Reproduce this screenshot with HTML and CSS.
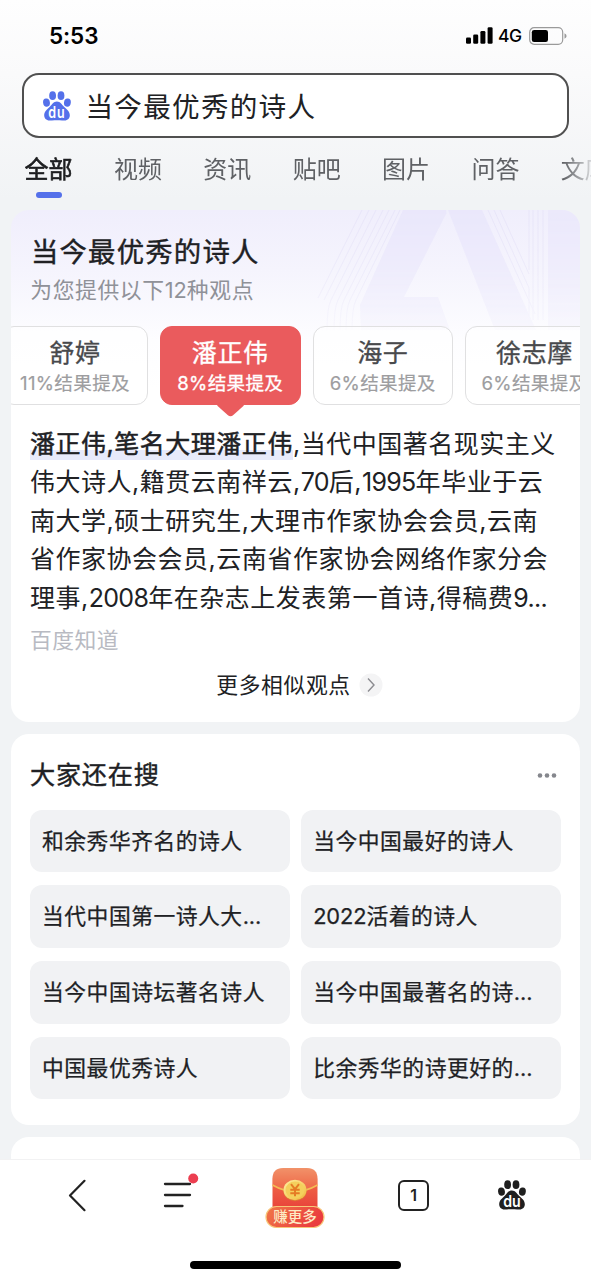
FILE: index.html
```
<!DOCTYPE html>
<html lang="zh-CN">
<head>
<meta charset="utf-8">
<title>当今最优秀的诗人</title>
<link rel="stylesheet" href="styles.css">
</head>
<body>
<svg class="defs" width="0" height="0">
  <symbol id="paw" viewBox="0 0 28 29.5">
    <g fill="currentColor">
      <ellipse cx="9.6" cy="4.4" rx="3.4" ry="4.4"/>
      <ellipse cx="18" cy="4.4" rx="3.4" ry="4.4"/>
      <ellipse cx="3.5" cy="11.4" rx="3.4" ry="4.200" transform="rotate(-8 3.500 11.400)"/>
      <ellipse cx="24.400" cy="11.400" rx="3.400" ry="4.200" transform="rotate(8 24.400 11.400)"/>
      <path d="M13.900 10.200C17.400 10.200 18.600 13 21 15.400C24 18.200 27 20.200 26.800 24.400C26.400 28.600 22.600 29.600 19 29.200C16 28.900 12 28.900 9 29.200C5.400 29.600 1.600 28.600 1.200 24.400C1 20.200 4 18.200 6.800 15.400C9.200 13 10.400 10.200 13.900 10.200Z"/>
    </g>
    <text class="paw-text" x="14" y="26.700" text-anchor="middle" textLength="17.500" lengthAdjust="spacingAndGlyphs">du</text>
  </symbol>
</svg>
<div class="screen">
  <header class="top">
    <div class="status">
      <span class="time">5:53</span>
      <div class="status-right">
        <svg width="27" height="17" viewBox="0 0 27 17"><rect x="0" y="10.500" width="5" height="6.200" rx="1.300"/><rect x="7.200" y="7.500" width="5" height="9.200" rx="1.300"/><rect x="14.400" y="4" width="5" height="12.700" rx="1.300"/><rect x="21.600" y="0.300" width="5" height="16.400" rx="1.300"/></svg>
        <span class="net">4G</span>
        <svg width="38" height="18" viewBox="0 0 38 18"><rect x="0.700" y="0.700" width="33" height="16.600" rx="4.500" fill="none" stroke="#9a9a9a" stroke-width="1.200"/><rect x="2.800" y="3" width="16.200" height="12" rx="2.300"/><path d="M35.500 6.300Q37.600 7.200 37.600 9T35.500 11.700Z" fill="#9a9a9a"/></svg>
      </div>
    </div>
    <div class="search">
      <svg class="logo" width="28" height="30"><use href="#paw"/></svg>
      <span>当今最优秀的诗人</span>
    </div>
    <nav class="tabs">
      <span class="tab active">全部</span><span class="tab">视频</span><span class="tab">资讯</span><span class="tab">贴吧</span><span class="tab">图片</span><span class="tab">问答</span><span class="tab">文库</span>
    </nav>
  </header>

  <main class="feed">
    <section class="card answer">
      <svg class="deco" width="269" height="160" viewBox="311 210 269 160">
        <defs>
          <linearGradient id="fade" x1="0" y1="0" x2="0" y2="1"><stop offset="0" stop-color="#fff" stop-opacity="0.700"/><stop offset="0.350" stop-color="#fff" stop-opacity="0.500"/><stop offset="0.750" stop-color="#fff" stop-opacity="0.150"/></linearGradient>
          <mask id="m"><rect x="311" y="210" width="269" height="160" fill="url(#fade)"/></mask>
        </defs>
        <g mask="url(#m)">
          <path fill="#e7e4fb" d="M403 210H446L446.500 213L404 297H438L450 330H361L360 305Z"/>
          <path fill="#e7e4fb" d="M448 210H482L536 330H495Z"/>
          <rect x="548" y="210" width="32" height="120" fill="#e9e6fb"/>
          <g fill="none" stroke="#e4e1f7" stroke-width="1">
            <path d="M400 210L356 300Q352 308 352 330"/><path d="M395 210L350 300Q346 308 346 330"/><path d="M389 210L344 300Q340 308 340 330"/><path d="M383 210L338 300Q334 308 334 330"/><path d="M376 210L331 300Q327 308 327 330"/><path d="M369 210L324 300"/><path d="M362 210L318 298"/>
            <path d="M488 210L535 314"/><path d="M494 210L529 288V330"/><path d="M500 210L529 274"/><path d="M529 210V270"/><path d="M533 210V320"/><path d="M538 210V320"/><path d="M543 210V320"/>
          </g>
        </g>
      </svg>
      <h1 class="answer-title">当今最优秀的诗人</h1>
      <p class="answer-sub">为您提供以下<span class="num">12</span>种观点</p>
      <div class="chips">
        <div class="chip first"><b>舒婷</b><small>11%结果提及</small></div>
        <div class="chip selected"><b>潘正伟</b><small>8%结果提及</small></div>
        <div class="chip"><b>海子</b><small>6%结果提及</small></div>
        <div class="chip last"><b>徐志摩</b><small>6%结果提及</small></div>
      </div>
      <div class="text">
        <div><mark>潘正伟,笔名大理潘正伟</mark>,当代中国著名现实主义</div>
        <div>伟大诗人,籍贯云南祥云,<span class="num">70</span>后,<span class="num">1995</span>年毕业于云</div>
        <div>南大学,硕士研究生,大理市作家协会会员,云南</div>
        <div>省作家协会会员,云南省作家协会网络作家分会</div>
        <div>理事,<span class="num">2008</span>年在杂志上发表第一首诗,得稿费<span class="num">9...</span></div>
      </div>
      <p class="source">百度知道</p>
      <div class="more"><span>更多相似观点</span>
        <svg width="24" height="24" viewBox="0 0 24 24"><circle cx="12" cy="12" r="11.500" fill="#f4f4f5"/><path d="M9 5.500L15 12L9 18.500" fill="none" stroke="#8b8b90" stroke-width="1.400"/></svg>
      </div>
    </section>

    <section class="card related">
      <div class="related-head"><h2>大家还在搜</h2>
        <svg width="20" height="6" viewBox="0 0 20 6" fill="#85878d"><circle cx="3" cy="3.500" r="2.300"/><circle cx="10" cy="3.500" r="2.300"/><circle cx="17" cy="3.500" r="2.300"/></svg>
      </div>
      <div class="pills">
        <span class="pill">和余秀华齐名的诗人</span><span class="pill">当今中国最好的诗人</span>
        <span class="pill">当代中国第一诗人大<i>...</i></span><span class="pill"><i>2022</i>活着的诗人</span>
        <span class="pill">当今中国诗坛著名诗人</span><span class="pill">当今中国最著名的诗<i>...</i></span>
        <span class="pill">中国最优秀诗人</span><span class="pill">比余秀华的诗更好的<i>...</i></span>
      </div>
    </section>
    <section class="card next"></section>
  </main>

  <footer class="bottom">
    <div class="nav">
      <svg class="back" width="20" height="34" viewBox="0 0 20 34" fill="none" stroke="#222" stroke-width="2.200" stroke-linecap="round" stroke-linejoin="round"><path d="M16.500 1.800L2 16.500L16.500 31.200"/></svg>
      <svg class="menu" width="36" height="40" viewBox="0 0 36 40"><path d="M6 8H31M6 19H31M6 30H23.500" fill="none" stroke="#222" stroke-width="2.300" stroke-linecap="round"/><circle cx="34.200" cy="2.500" r="5" fill="#ec3e50"/></svg>
      <svg class="packet" width="64" height="66" viewBox="0 0 64 66">
        <defs>
          <linearGradient id="r1" x1="0" y1="0" x2="0" y2="1"><stop offset="0" stop-color="#f3a077"/><stop offset="0.400" stop-color="#ef6246"/><stop offset="1" stop-color="#e8423a"/></linearGradient>
          <linearGradient id="r2" x1="0" y1="0" x2="1" y2="0.300"><stop offset="0" stop-color="#f07848"/><stop offset="1" stop-color="#ea3c3e"/></linearGradient>
          <linearGradient id="gold" x1="0" y1="0" x2="1" y2="1"><stop offset="0" stop-color="#fff0a0"/><stop offset="1" stop-color="#efb83c"/></linearGradient>
        </defs>
        <path d="M9.500 44V14Q9.500 3 20.500 3H43.500Q54.500 3 54.500 14V44Z" fill="url(#r1)"/>
        <path d="M9.500 20V14Q9.500 3 20.500 3H43.500Q54.500 3 54.500 14V20Q32 33 9.500 20Z" fill="#f08058" opacity="0.450"/>
        <path d="M9.500 20Q32 33 54.500 20" fill="none" stroke="#f3bd55" stroke-width="1.500"/>
        <ellipse cx="32" cy="26" rx="11.600" ry="10.200" fill="#d98c2e" opacity="0.600"/>
        <ellipse cx="32" cy="25" rx="11.500" ry="10.200" fill="url(#gold)"/>
        <ellipse cx="32" cy="25" rx="9.500" ry="8.400" fill="#f4cf5c"/>
        <path d="M28 19.200L32 24.200L36 19.200M32 24.200V31.200M27.300 24.700H36.700M27.300 28.200H36.700" fill="none" stroke="#e57b24" stroke-width="2"/>
        <rect x="3" y="41.500" width="58" height="21" rx="10.500" fill="url(#r2)" stroke="#f7c77a" stroke-width="1.200"/>
        <text x="32" y="57.200" text-anchor="middle" class="earn">赚更多</text>
      </svg>
      <span class="tabcount">1</span>
      <svg class="home" width="28" height="30"><use href="#paw"/></svg>
    </div>
    <div class="indicator"></div>
  </footer>
</div>
</body>
</html>
```
FILE: styles.css
```
* { box-sizing: border-box; }
body, h1, h2, p { margin: 0; font-weight: 400; }
body { font-family: Inter, "Noto Sans CJK SC", sans-serif; color: #202124; background: #f1f3f5; }
svg { display: block; flex: none; }
.defs { position: absolute; }
.screen { width: 591px; height: 1280px; overflow: hidden; display: flex; flex-direction: column; background: #f1f3f5; }
.top { height: 210px; flex: none; background: linear-gradient(#fefefe, #fafafb 35%, #f1f3f5 95%); }
.status { height: 73px; padding: 0 24px 2px 49px; display: flex; align-items: center; justify-content: space-between; color: #000; }
.time { font-size: 22.500px; font-weight: 600; letter-spacing: -0.100px; }
.status-right { display: flex; align-items: center; }
.net { font-size: 17.500px; font-weight: 500; margin: 0 7px 0 5px; width: 24px; letter-spacing: -0.500px; }
.search { margin: 0 22px; height: 65px; border: 2px solid #505050; border-radius: 17px; background: #fff; display: flex; align-items: center; gap: 15px; padding-left: 18.500px; font-size: 27.600px; letter-spacing: 1.250px; line-height: 40px; white-space: nowrap; }
.search span { padding-top: 2px; }
.logo { color: #5470ea; }
.paw-text { font: 600 15.500px Inter, sans-serif; fill: #fff; }
.tabs { margin-left: 24.500px; display: flex; gap: 41.400px; padding-top: 14px; height: 62px; overflow: hidden; font-size: 24px; line-height: 36px; color: #5f6165; mask-image: linear-gradient(90deg, #000 538px, transparent 574px); }
.tab { flex: none; width: 48px; display: flex; flex-direction: column; align-items: center; white-space: nowrap; }
.active { color: #1d1e20; -webkit-text-stroke: 0.600px #1d1e20; }
.active::after { content: ""; width: 26px; height: 6px; border-radius: 3px; background: #5470ea; margin-top: 4px; }
.feed { padding: 0 11.400px; height: 949px; flex: none; overflow: hidden; display: flex; flex-direction: column; gap: 12px; }
.card { background: #fff; border-radius: 18px; flex: none; overflow: hidden; }
.answer { height: 512px; position: relative; background: linear-gradient(#f0eefc, #f5f4fd 60px, #fdfdff 130px, #fff 180px); }
.deco { position: absolute; right: 0; top: 0; }
.answer > :not(.deco) { position: relative; }
.answer-title { padding: 21px 0 0 19.500px; font-size: 27.400px; letter-spacing: 1.200px; line-height: 42px; -webkit-text-stroke: 0.400px #202124; }
.answer-sub { padding-left: 18.900px; margin-top: 1px; font-size: 21.800px; letter-spacing: 0.600px; line-height: 33px; color: #8f9198; }
.num { letter-spacing: -0.500px; }
.answer-sub .num { letter-spacing: 0; }
.chips { display: flex; gap: 12px; margin: 19px 0 0 -9.400px; }
.chip { width: 140.500px; height: 79px; flex: none; border: 1.500px solid #e0e0e1; border-radius: 12px; background: rgba(255,255,255,.5); display: flex; flex-direction: column; align-items: center; color: #48494c; position: relative; white-space: nowrap; }
.chip.first { width: 146px; }
.chip.last { width: 139px; }
.chip b { font-size: 25px; letter-spacing: 0.600px; line-height: 34px; margin-top: 9px; font-weight: 400; -webkit-text-stroke: 0.350px currentColor; }
.chip small { font-size: 18.600px; letter-spacing: 0.300px; line-height: 26px; color: #9d9d9f; -webkit-text-stroke: 0.200px currentColor; }
.chip.selected { background: #ea5b5d; border-color: #ea5b5d; color: #fff; }
.chip.selected small { color: #fff; -webkit-text-stroke-width: 0.300px; }
.chip.selected::after { content: ""; position: absolute; width: 19px; height: 19px; left: 60px; top: 68.500px; background: #ea5b5d; transform: scaleY(0.900) rotate(45deg); border-radius: 0 0 4px 0; }
.text { padding: 19.500px 0 0 18.600px; font-size: 25px; letter-spacing: 0.520px; line-height: 38.600px; white-space: nowrap; }
mark { color: inherit; padding-bottom: 1px; background: linear-gradient(#e7eafb, #e7eafb) 0 100% / 100% 10px no-repeat; -webkit-text-stroke: 0.500px #202124; }
.text .num { letter-spacing: -0.700px; }
.source { padding-left: 18.500px; margin-top: 7px; font-size: 21.800px; letter-spacing: 0.500px; line-height: 32px; color: #b8bac2; }
.more { display: flex; justify-content: center; align-items: center; gap: 8px; margin-top: 13px; padding-left: 8px; font-size: 21.800px; letter-spacing: 0.600px; line-height: 32px; }
.related { height: 391px; padding: 21px 18.600px 0; }
.related-head { display: flex; justify-content: space-between; align-items: center; height: 40px; padding-right: 4.500px; }
.related-head h2 { font-size: 25.200px; letter-spacing: 0.750px; line-height: 40px; -webkit-text-stroke: 0.400px #202124; }
.pills { display: grid; grid-template-columns: 259.700px 259.700px; column-gap: 11.500px; row-gap: 13.300px; margin-top: 14.500px; }
.pill { height: 62.500px; line-height: 62px; border-radius: 12px; background: #f1f2f4; padding-left: 12px; font-size: 21.800px; letter-spacing: 0.500px; white-space: nowrap; -webkit-text-stroke: 0.250px #202124; }
.pill i { font-style: normal; letter-spacing: -0.100px; }
.next { height: 60px; }
.bottom { flex: none; height: 121px; background: #fff; border-top: 1px solid #f2f2f3; }
.nav { height: 72px; display: grid; grid-template-columns: repeat(5, 118.200px); align-items: center; justify-items: center; }
.back { margin-left: 37px; }
.menu { overflow: visible; }
.packet { margin-top: 3px; }
.home { margin: 0 39px 2px 0; color: #1f1f1f; }
.earn { font: 500 14.500px "Noto Sans CJK SC", sans-serif; fill: #fdeac5; }
.tabcount { width: 31px; height: 31px; margin-bottom: 2px; border: 2px solid #222; border-radius: 6px; display: flex; align-items: center; justify-content: center; font-size: 16px; font-weight: 600; color: #222; }
.indicator { width: 211px; height: 8px; border-radius: 4px; background: #000; margin: 29px auto 0; }
```
